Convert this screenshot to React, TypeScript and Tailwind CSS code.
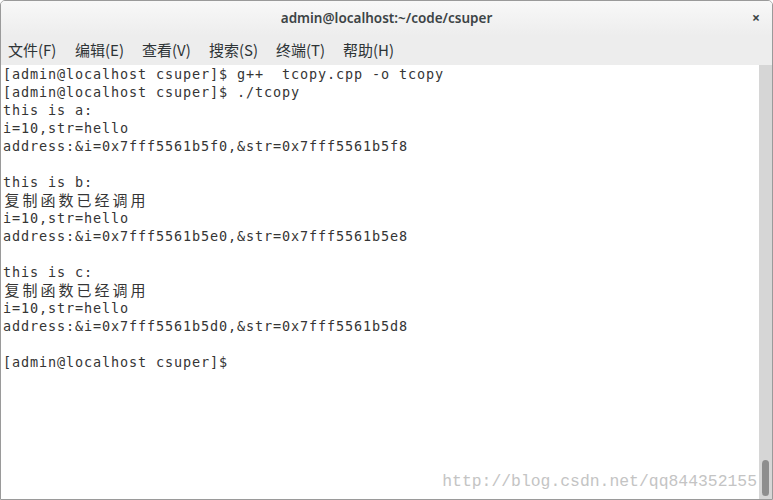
import React from "react";

const lines: string[] = [
  "[admin@localhost csuper]$ g++  tcopy.cpp -o tcopy",
  "[admin@localhost csuper]$ ./tcopy",
  "this is a:",
  "i=10,str=hello",
  "address:&i=0x7fff5561b5f0,&str=0x7fff5561b5f8",
  "",
  "this is b:",
  "复制函数已经调用",
  "i=10,str=hello",
  "address:&i=0x7fff5561b5e0,&str=0x7fff5561b5e8",
  "",
  "this is c:",
  "复制函数已经调用",
  "i=10,str=hello",
  "address:&i=0x7fff5561b5d0,&str=0x7fff5561b5d8",
  "",
  "[admin@localhost csuper]$",
];

const menus = ["文件(F)", "编辑(E)", "查看(V)", "搜索(S)", "终端(T)", "帮助(H)"];

function Line({ text }: { text: string }) {
  const isCjk = /[\u4e00-\u9fff]/.test(text);
  if (isCjk) {
    return (
      <div className="h-[18px] leading-[18px] whitespace-pre flex">
        {Array.from(text).map((c, i) => (
          <span
            key={i}
            className="inline-block w-[18px] text-center text-[15px] font-['Noto_Sans_CJK_SC',sans-serif]"
          >
            {c}
          </span>
        ))}
      </div>
    );
  }
  return (
    <div className="h-[18px] leading-[18px] whitespace-pre text-[13.5px] tracking-[0.87px] font-['DejaVu_Sans_Mono',monospace]">
      {text || " "}
    </div>
  );
}

export default function App() {
  return (
    <div className="w-[773px] h-[500px] overflow-hidden bg-[#ededed] flex flex-col border border-[#9a9a9a] rounded-t-[5px] font-['Noto_Sans',sans-serif]">
      <div className="h-[35px] shrink-0 flex items-center justify-center relative bg-gradient-to-b from-[#f8f8f8] to-[#ededed]">
        <span className="text-[13.5px] font-semibold text-[#3d4446]">admin@localhost:~/code/csuper</span>
        <span className="absolute right-[12px] top-[10px] text-[14px] font-bold text-[#3d4446] leading-none">×</span>
      </div>
      <div className="h-[29px] shrink-0 flex items-center pl-[7px] gap-[16px] text-[15px] text-[#2e3436] font-['Noto_Sans_CJK_SC',sans-serif]">
        {menus.map((m) => (
          <span key={m} className="w-[51px] whitespace-nowrap">{m}</span>
        ))}
      </div>
      <div className="flex-1 flex bg-white min-h-0">
        <div className="flex-1 relative pl-[2px] text-[#353535] overflow-hidden">
          {lines.map((l, i) => (
            <Line key={i} text={l} />
          ))}
          <div className="absolute right-[2px] bottom-[9px] text-[16.4px] text-[#c4c4c4] font-['Liberation_Mono',monospace] leading-none">
            http://blog.csdn.net/qq844352155
          </div>
        </div>
        <div className="w-[13px] shrink-0 bg-[#d6d6d6] flex flex-col justify-end items-center pb-[3px]">
          <div className="w-[7px] h-[36px] rounded-full bg-[#8e8e8e]" />
        </div>
      </div>
    </div>
  );
}
